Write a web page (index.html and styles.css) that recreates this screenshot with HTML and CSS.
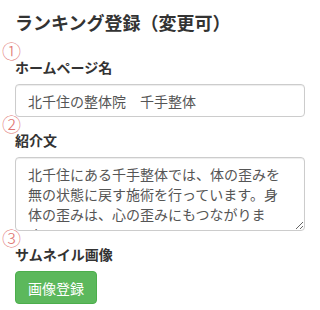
FILE: index.html
```html
<!DOCTYPE html>
<html lang="ja">
<head>
<meta charset="utf-8">
<title>ランキング登録</title>
<link rel="stylesheet" href="styles.css">
</head>
<body>
<div class="page">
  <h3 class="title">ランキング登録（変更可）</h3>
  <div class="group">
    <div class="num">①</div>
    <label class="label">ホームページ名</label>
    <input class="control" type="text" value="北千住の整体院　千手整体">
  </div>
  <div class="group">
    <div class="num">②</div>
    <label class="label">紹介文</label>
    <textarea class="control area" rows="3">北千住にある千手整体では、体の歪みを無の状態に戻す施術を行っています。身体の歪みは、心の歪みにもつながります。</textarea>
  </div>
  <div class="group">
    <div class="num">③</div>
    <label class="label">サムネイル画像</label>
    <div><button class="btn" type="button">画像登録</button></div>
  </div>
</div>
</body>
</html>
```
FILE: styles.css
```css
html, body {
  margin: 0;
  padding: 0;
  background: #fff;
}
body {
  font-family: "Noto Sans CJK JP", "Noto Sans", sans-serif;
  font-size: 14px;
  color: #333;
  text-spacing-trim: space-all;
}
.page {
  padding: 0 15px;
}
.title {
  margin: 12px 0 13px;
  font-size: 18px;
  line-height: 20px;
  font-weight: bold;
  color: #333;
}
.group {
  display: flex;
  flex-direction: column;
  align-items: stretch;
  margin-bottom: 1px;
}
.group + .group + .group {
  margin-top: 1px;
}
.num {
  height: 12px;
  line-height: 12px;
  font-size: 19px;
  font-weight: 300;
  color: #d9534f;
  margin-left: -13px;
  opacity: 0.8;
}
.label {
  display: block;
  line-height: 20px;
  font-weight: bold;
  margin-bottom: 7px;
}
.control {
  box-sizing: border-box;
  width: 100%;
  height: 33px;
  margin: 0;
  padding: 6px 12px;
  font-family: "Noto Sans CJK JP", "Noto Sans", sans-serif;
  font-size: 14px;
  line-height: 20px;
  color: #555;
  background: #fff;
  border: 1px solid #ccc;
  border-radius: 4px;
  box-shadow: inset 0 1px 1px rgba(0,0,0,0.075);
  text-spacing-trim: space-all;
}
.area {
  height: 74px;
  overflow: hidden;
  resize: vertical;
  display: block;
  padding-right: 14px;
}
.btn {
  box-sizing: border-box;
  height: 33px;
  margin: 0;
  padding: 0 12px;
  font-family: "Noto Sans CJK JP", "Noto Sans", sans-serif;
  font-size: 14px;
  line-height: 20px;
  color: #fff;
  background: #5cb85c;
  border: 1px solid #4cae4c;
  border-radius: 4px;
}
```
